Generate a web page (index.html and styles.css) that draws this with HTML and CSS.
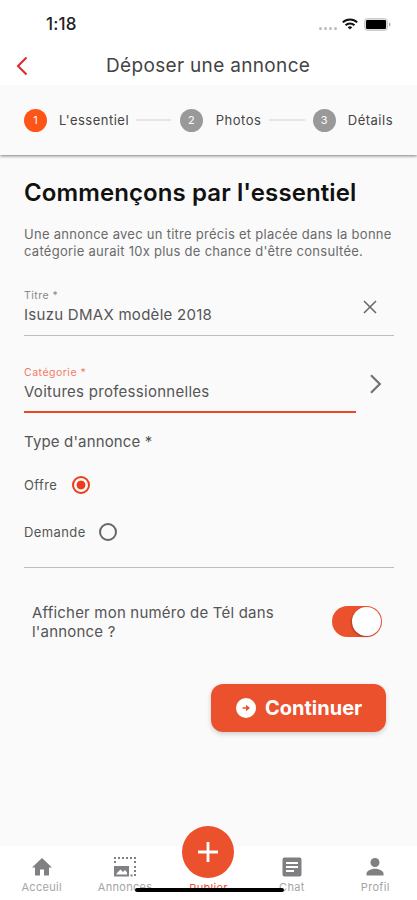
FILE: index.html
```html
<!DOCTYPE html>
<html lang="fr">
<head>
  <meta charset="UTF-8">
  <meta name="viewport" content="width=device-width, initial-scale=1">
  <title>Déposer une annonce</title>
  <link rel="stylesheet" href="styles.css">
</head>
<body>

  <div class="status-bar">
    <span class="time">1:18</span>
    <div class="status-icons">
      <span class="signal"><i></i><i></i><i></i><i></i></span>
      <svg class="wifi" width="16" height="12" viewBox="0 0 16 12" fill="none" stroke="#111" stroke-width="2">
        <path d="M.8 4.4a10.4 10.4 0 0 1 14.4 0M3.5 7.2a6.5 6.5 0 0 1 9 0"/>
        <path d="M8 11.6 5.7 9.3a3.4 3.4 0 0 1 4.6 0z" fill="#111" stroke="none"/>
      </svg>
      <svg width="27" height="13" viewBox="0 0 27 13">
        <rect x=".5" y=".5" width="23" height="12" rx="3" fill="#ddd" stroke="#ccc"/>
        <rect x="2" y="2" width="20" height="9" rx="1.2" fill="#000"/>
        <path d="M25 4.5c2 .6 2 3.400 0 4z" fill="#aaa"/>
      </svg>
    </div>
  </div>

  <header class="app-bar">
    <svg class="back" width="12" height="20" viewBox="0 0 12 20" fill="none" stroke="#e5252a" stroke-width="2">
      <path d="M10.500 1.500 2 10l8.500 8.500"/>
    </svg>
    <h1>Déposer une annonce</h1>
  </header>

  <div class="stepper">
    <span class="step-num active">1</span>
    <span class="step-label essentiel">L'essentiel</span>
    <span class="step-line"></span>
    <span class="step-num">2</span>
    <span class="step-label photos">Photos</span>
    <span class="step-line"></span>
    <span class="step-num">3</span>
    <span class="step-label details">Détails</span>
  </div>

  <main>
    <h2>Commençons par l'essentiel</h2>
    <p class="intro">Une annonce avec un titre précis et placée dans la bonne<br>catégorie aurait 10x plus de chance d'être consultée.</p>

    <div class="field">
      <div class="field-text">
        <label>Titre *</label>
        <div class="value">Isuzu DMAX modèle 2018</div>
      </div>
      <svg class="clear" width="14" height="14" viewBox="0 0 14 14" stroke="#666" stroke-width="1.500">
        <path d="m1 1 12 12M13 1 1 13"/>
      </svg>
    </div>

    <div class="category">
      <div class="field focused">
        <div class="field-text">
          <label>Catégorie *</label>
          <div class="value voitures">Voitures professionnelles</div>
        </div>
      </div>
      <svg class="chevron" width="13" height="20" viewBox="0 0 13 20" fill="none" stroke="#747474" stroke-width="2.200">
        <path d="m2 1.200 8.800 8.800L2 18.800"/>
      </svg>
    </div>

    <div class="type-title">Type d'annonce *</div>
    <div class="radio-row offre">
      <span>Offre</span>
      <i class="radio checked"></i>
    </div>
    <div class="radio-row demande">
      <span>Demande</span>
      <i class="radio"></i>
    </div>

    <div class="phone-row">
      <p>Afficher mon numéro de Tél dans<br>l'annonce ?</p>
      <div class="switch"></div>
    </div>

    <button class="continue">
      <svg width="20" height="20" viewBox="0 0 20 20">
        <circle cx="10" cy="10" r="10" fill="#fff"/>
        <path d="M6.500 9.200h3.500V6.800l4 3.200-4 3.200v-2.400H6.500z" fill="#ec512e"/>
      </svg>
      <span>Continuer</span>
    </button>
  </main>

  <nav>
    <div class="nav-item">
      <svg width="24" height="24" viewBox="0 0 24 24" fill="#808083"><path d="M10 20.500v-6h4v6h5v-8h3L12 3 2 12.500h3v8z"/></svg>
      <span>Acceuil</span>
    </div>
    <div class="nav-item">
      <svg width="24" height="24" viewBox="0 0 24 24" fill="#808083">
        <path fill-rule="evenodd" d="M1 11h15v10.500H1zM3.500 19.500h10.500v-2l-2-2.500-2 2-2.500-2.500-4 4z"/>
        <path d="M1 2h2v2H1zM5 2h2v2H5zM9 2h2v2H9zM13 2h2v2h-2zM17 2h2v2h-2zM21 2h2v2h-2zM1 6h2v2H1zM21 6h2v2h-2zM21 11h2v2h-2zM21 15h2v2h-2zM21 19h2v2h-2zM17.500 19.500h2v2h-2z"/>
      </svg>
      <span>Annonces</span>
    </div>
    <div class="nav-item publish">
      <div class="fab">
        <svg width="20" height="20" viewBox="0 0 20 20" stroke="#fff" stroke-width="2.800"><path d="M10 0v20M0 10h20"/></svg>
      </div>
      <span>Publier</span>
    </div>
    <div class="nav-item">
      <svg width="24" height="24" viewBox="0 0 24 24" fill="#808083">
        <path fill-rule="evenodd" d="M4.500 2.500h15a2 2 0 0 1 2 2v15a2 2 0 0 1-2 2h-15a2 2 0 0 1-2-2v-15a2 2 0 0 1 2-2zM6 7v2h12V7zM6 11v2h12v-2zM6 15v2h8v-2z"/>
      </svg>
      <span>Chat</span>
    </div>
    <div class="nav-item">
      <svg width="24" height="24" viewBox="0 0 24 24" fill="#808083">
        <circle cx="12" cy="7.500" r="4.500"/>
        <path d="M3.500 20.500v-2c0-3 5.500-4.700 8.500-4.700s8.500 1.700 8.500 4.700v2z"/>
      </svg>
      <span>Profil</span>
    </div>
    <div class="home-indicator"></div>
  </nav>

</body>
</html>
```

FILE: styles.css
```css
* {
  box-sizing: border-box;
}

body {
  font-family: Inter, sans-serif;
  background: #fafafa;
  color: #555;
  margin: 0;
  height: 900px;
  display: flex;
  flex-direction: column;
  overflow: hidden;
}

h1, h2, p {
  margin: 0;
}

span, label, .value {
  white-space: nowrap;
}

svg {
  display: block;
  flex-shrink: 0;
}

.status-bar {
  height: 46px;
  background: #fff;
  display: flex;
  justify-content: space-between;
  padding: 14px 26px 0 46px;
}

.time {
  font-size: 17px;
  line-height: 20px;
  font-weight: 500;
  letter-spacing: 0.2px;
  color: #222;
}

.status-icons {
  display: flex;
  align-items: center;
  height: 20px;
  gap: 6px;
}

.signal {
  display: flex;
  gap: 2px;
  margin-right: -1px;
  padding-top: 8px;
}

.signal i {
  width: 3px;
  height: 3px;
  border-radius: 50%;
  background: #bbb;
}

.app-bar {
  position: relative;
  z-index: 1;
  height: 39px;
  background: #fff;
  display: flex;
  align-items: center;
  padding: 0 0 0 16px;
}

h1 {
  margin-left: 78px;
  font-size: 19px;
  line-height: 24px;
  font-weight: 400;
  letter-spacing: 0.33px;
  color: #444;
}

.stepper {
  height: 70px;
  flex-shrink: 0;
  display: flex;
  align-items: center;
  padding: 0 24px;
  background: #fafafa;
  box-shadow: 0 1px 3px rgba(0, 0, 0, 0.5);
}

.step-num {
  width: 23px;
  height: 23px;
  border-radius: 50%;
  background: #999;
  color: #fff;
  font-size: 11px;
  line-height: 23px;
  text-align: center;
  flex-shrink: 0;
}

.step-num.active {
  background: #fd5418;
}

.step-label {
  margin-left: 12px;
  font-size: 13px;
  letter-spacing: 0.5px;
  color: #444;
}

.essentiel {
  width: 77px;
}

.photos {
  margin-left: 13px;
  width: 54px;
}

.step-line {
  width: 36px;
  height: 2px;
  background: #e6e6e6;
  margin: 0 8px 0 0;
}

.essentiel + .step-line {
  margin-right: 8.5px;
}

.photos + .step-line {
  margin-right: 7.5px;
}

main {
  flex: 1;
  padding: 24px 23px 0 24px;
}

h2 {
  font-size: 24px;
  line-height: 28px;
  font-weight: 600;
  letter-spacing: 0.1px;
  white-space: nowrap;
  color: #111;
}

.intro {
  margin-top: 19px;
  font-size: 13px;
  line-height: 16.5px;
  letter-spacing: 0.27px;
  white-space: nowrap;
  color: #6a6a6a;
}

.field {
  display: flex;
  justify-content: space-between;
  height: 49px;
  margin-top: 28px;
  border-bottom: 1px solid #bdbdbd;
}

.field-text {
  padding-top: 2px;
}

.field label {
  display: block;
  font-size: 10.5px;
  line-height: 14px;
  letter-spacing: 0.5px;
  color: #888;
}

.value {
  margin-top: 2px;
  font-size: 15px;
  line-height: 20px;
  letter-spacing: 0.28px;
}

.clear {
  margin: 13px 17px 0 0;
}

.category {
  display: flex;
}

.field.focused {
  width: 332px;
  border-bottom: 2px solid #ec4724;
}

.focused label {
  color: #f47b62;
}

.chevron {
  margin: 38px 0 0 13px;
}

.type-title {
  margin-top: 19px;
  font-size: 15px;
  line-height: 20px;
  letter-spacing: 0.15px;
}

.radio-row {
  display: flex;
  align-items: center;
  font-size: 13px;
  line-height: 18px;
  letter-spacing: 0.4px;
}

.offre {
  height: 18px;
  margin-top: 24px;
}

.demande {
  height: 18px;
  margin: 29px 0 26px;
}

.offre span {
  width: 48px;
}

.demande span {
  width: 75px;
}

.radio {
  width: 18px;
  height: 18px;
  border: 2px solid #666;
  border-radius: 50%;
}

.radio.checked {
  border-color: #ec3c1a;
  background: radial-gradient(circle, #ec3c1a 4px, transparent 4.8px);
}

.phone-row {
  display: flex;
  justify-content: space-between;
  border-top: 1px solid #bdbdbd;
  padding: 35px 12px 0 8px;
}

.phone-row p {
  font-size: 15px;
  line-height: 19px;
  letter-spacing: 0.2px;
  white-space: nowrap;
}

.switch {
  width: 50px;
  height: 31px;
  margin-top: 3px;
  border-radius: 16px;
  background: #ec512e;
  display: flex;
  justify-content: flex-end;
  padding: 1px;
}

.switch::after {
  content: "";
  width: 29px;
  height: 29px;
  border-radius: 50%;
  background: #fff;
  box-shadow: -1px 1px 2px rgba(0, 0, 0, 0.25);
}

.continue {
  display: flex;
  align-items: center;
  gap: 9px;
  width: 175px;
  height: 48px;
  margin: 43px 8px 0 auto;
  padding: 0 0 0 25px;
  border: none;
  border-radius: 12px;
  background: #ec512e;
  box-shadow: 0 2px 5px rgba(0, 0, 0, 0.18);
  color: #fff;
  font-family: inherit;
  font-size: 20px;
  font-weight: 700;
}

nav {
  position: relative;
  height: 54px;
  background: #fff;
  display: flex;
  justify-content: space-between;
}

.nav-item {
  width: 83.4px;
  display: flex;
  flex-direction: column;
  align-items: center;
  padding-top: 9px;
  font-size: 11px;
  line-height: 14px;
  letter-spacing: 0.3px;
  color: #a5a5a5;
}

.nav-item span {
  margin-top: 1px;
}

.publish {
  color: #ec512e;
}

.fab {
  width: 52px;
  height: 52px;
  margin-top: -29px;
  border-radius: 50%;
  background: #ec512e;
  display: flex;
  align-items: center;
  justify-content: center;
}

.nav-item.publish span {
  margin-top: 3px;
}

.home-indicator {
  position: absolute;
  left: 135px;
  bottom: 8px;
  width: 149px;
  height: 4px;
  border-radius: 2px;
  background: #000;
}
```
